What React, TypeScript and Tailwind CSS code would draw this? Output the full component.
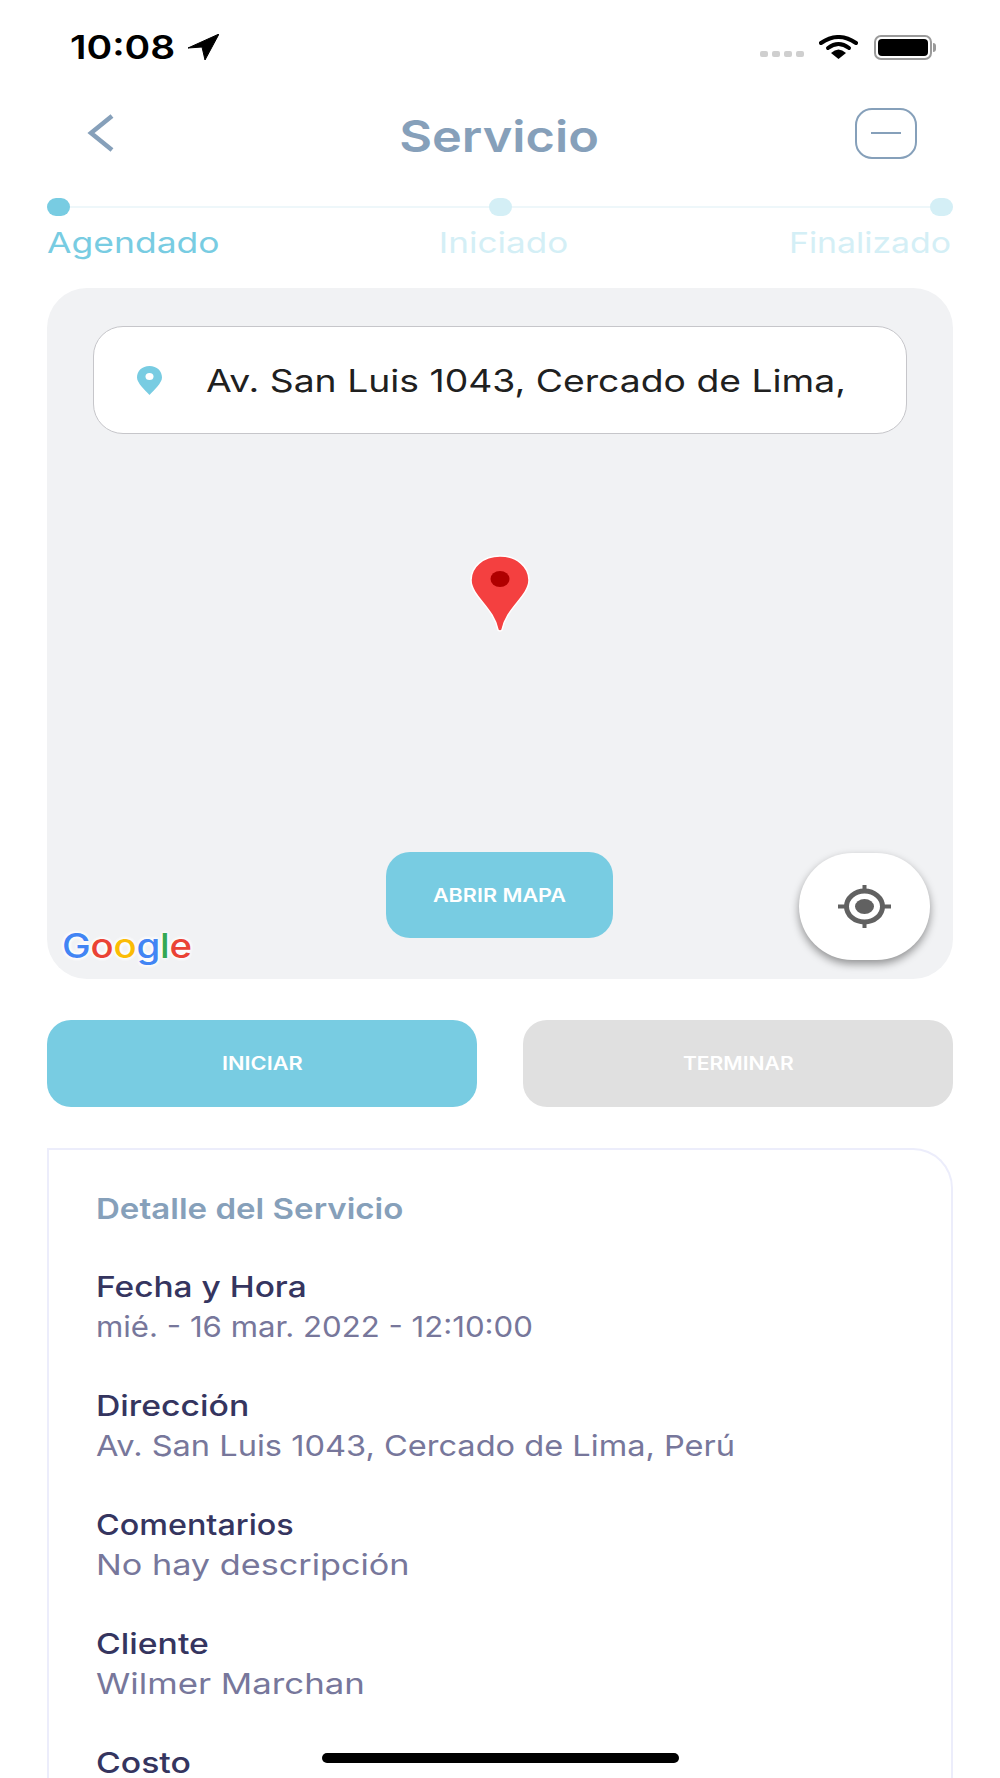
import React from 'react';

const rows = [
  { label: 'Fecha y Hora', value: 'mié. - 16 mar. 2022 - 12:10:00', labelFit: 'scale-x-[1.154]', valueFit: 'scale-x-[1.075]' },
  { label: 'Dirección', value: 'Av. San Luis 1043, Cercado de Lima, Perú', labelFit: 'scale-x-[1.164]', valueFit: 'scale-x-[1.123]' },
  { label: 'Comentarios', value: 'No hay descripción', labelFit: 'scale-x-[1.114]', valueFit: 'scale-x-[1.18]' },
  { label: 'Cliente', value: 'Wilmer Marchan', labelFit: 'scale-x-[1.164]', valueFit: 'scale-x-[1.2]' },
  { label: 'Costo', value: '', labelFit: 'scale-x-[1.164]', valueFit: '' },
];

function StatusBar() {
  return (
    <div className="flex h-[94px] items-center justify-between pl-[70px] pr-[64px]">
      <div className="flex items-center gap-[29px]">
        <span className="origin-left scale-x-[1.18] text-[33px] leading-none font-semibold text-black">10:08</span>
        <svg width="31" height="26" viewBox="0 0 31 26">
          <path d="M0 14 L31 0 L17 26 L14 13 Z" fill="#000" stroke="#000" strokeWidth="1" strokeLinejoin="round" />
        </svg>
      </div>
      <div className="flex items-center">
        <div className="mt-[14px] mr-[15px] flex gap-[4px]">
          {[0, 1, 2, 3].map((i) => (
            <div key={i} className="h-[6px] w-[8px] rounded-[2px] bg-[#cfcfcf]" />
          ))}
        </div>
        <svg width="39" height="24" viewBox="0 0 39 24" className="mr-[16px]">
          <path d="M2 8 Q19.5 -4 37 8" fill="none" stroke="#000" strokeWidth="4" strokeLinecap="round" />
          <path d="M9 13 Q19.5 5 30 13" fill="none" stroke="#000" strokeWidth="4" strokeLinecap="round" />
          <path d="M12 18 Q19.5 11 27 18 L19.5 24 Z" fill="#000" />
        </svg>
        <div className="flex items-center">
          <div className="flex h-[25px] w-[58px] items-center rounded-[7px] border-2 border-[#9a9a9a] p-[2px]">
            <div className="h-full w-full rounded-[4px] bg-black" />
          </div>
          <div className="ml-[1px] h-[9px] w-[3px] rounded-r-full bg-[#9a9a9a]" />
        </div>
      </div>
    </div>
  );
}

function Header() {
  return (
    <div className="flex h-[78px] items-center justify-between pl-[87px] pr-[83px]">
      <svg width="28" height="38" viewBox="0 0 28 38">
        <path d="M25 2 L4 19 L25 36" fill="none" stroke="#86a0ba" strokeWidth="4.5" />
      </svg>
      <h1 className="mt-[6px] ml-[28px] scale-x-[1.147] text-[44px] leading-none font-semibold text-[#86a0ba]">Servicio</h1>
      <div className="flex h-[51px] w-[62px] items-center justify-center rounded-[17px] border-2 border-[#86a0ba]">
        <div className="h-[2px] w-[30px] bg-[#86a0ba]" />
      </div>
    </div>
  );
}

function Stepper() {
  return (
    <div className="mt-[26px] px-[47px]">
      <div className="flex items-center">
        <div className="h-[18px] w-[23px] rounded-full bg-[#78cce2]" />
        <div className="h-[2px] flex-1 bg-[#eef7fa]" />
        <div className="h-[18px] w-[23px] rounded-full bg-[#d4eff6]" />
        <div className="h-[2px] flex-1 bg-[#eef7fa]" />
        <div className="h-[18px] w-[23px] rounded-full bg-[#d4eff6]" />
      </div>
      <div className="mt-[11px] flex justify-between pr-[2px] text-[29px] leading-[32px]">
        <span className="origin-left scale-x-[1.224] text-[#78cce2]">Agendado</span>
        <span className="ml-[6px] scale-x-[1.21] text-[#d4eff6]">Iniciado</span>
        <span className="origin-right scale-x-[1.166] text-[#d4eff6]">Finalizado</span>
      </div>
    </div>
  );
}

function MapCard() {
  return (
    <div className="relative mx-[47px] mt-[29px] h-[691px] rounded-[40px] bg-[#f1f2f4] pt-[38px]">
      <div className="mx-[46px] flex h-[108px] items-center rounded-[30px] border border-[#c6c6ca] bg-white pl-[43px]">
        <svg width="25" height="29" viewBox="0 0 25 29">
          <path d="M12.5 0 C5 0 0 5 0 11.5 C0 17 8 24 12.5 29 C17 24 25 17 25 11.5 C25 5 20 0 12.5 0 Z" fill="#78cce2" />
          <ellipse cx="12.5" cy="10.5" rx="4" ry="3.5" fill="#fff" />
        </svg>
        <span className="ml-[44px] origin-left scale-x-[1.203] text-[31px] leading-none text-[#202020]">Av. San Luis 1043, Cercado de Lima,</span>
      </div>

      {/* marker */}
      <svg width="60" height="79" viewBox="0 0 60 79" className="absolute top-[266px] left-[423px]">
        <path
          d="M30 2 C13 2 1 13 1 26 C1 42 24 54 28 76 Q30 78 32 76 C36 54 59 42 59 26 C59 13 47 2 30 2 Z"
          fill="#f44040"
          stroke="#fff"
          strokeWidth="1.5"
        />
        <ellipse cx="30" cy="25" rx="9.5" ry="8" fill="#b00000" />
      </svg>

      <div className="absolute top-[564px] left-[339px] flex h-[86px] w-[227px] items-center justify-center rounded-[24px] bg-[#78cce2] text-[18px] font-semibold text-white">
        <span className="scale-x-[1.2]">ABRIR MAPA</span>
      </div>

      <div className="absolute top-[565px] left-[752px] flex h-[107px] w-[131px] items-center justify-center rounded-full bg-white shadow-[0_4px_8px_rgba(0,0,0,0.4)]">
        <svg width="53" height="43" viewBox="0 0 53 43">
          <ellipse cx="26.5" cy="21.5" rx="18" ry="15.5" fill="none" stroke="#616161" strokeWidth="5" />
          <ellipse cx="26.5" cy="21.5" rx="9.5" ry="7.5" fill="#616161" />
          <path d="M26.5 0 V6 M26.5 37 V43 M0 21.5 H8 M45 21.5 H53" stroke="#616161" strokeWidth="4" />
        </svg>
      </div>

      <div className="absolute bottom-[13px] left-[15px] origin-left scale-x-[1.13] text-[34px] leading-[40px] font-medium tracking-[-0.2px] [text-shadow:0_0_4px_#fff,0_0_4px_#fff,0_0_4px_#fff]">
        <span className="text-[#4285f4]">G</span>
        <span className="text-[#ea4335]">o</span>
        <span className="text-[#fbbc05]">o</span>
        <span className="text-[#4285f4]">g</span>
        <span className="text-[#34a853]">l</span>
        <span className="text-[#ea4335]">e</span>
      </div>
    </div>
  );
}

function Actions() {
  return (
    <div className="mx-[47px] mt-[41px] flex gap-[46px]">
      <div className="flex h-[87px] flex-1 items-center justify-center rounded-[24px] bg-[#78cce2] text-[18px] font-semibold text-white">
        <span className="scale-x-[1.21]">INICIAR</span>
      </div>
      <div className="flex h-[87px] flex-1 items-center justify-center rounded-[24px] bg-[#e0e0e0] text-[18px] font-semibold text-white">
        <span className="scale-x-[1.17]">TERMINAR</span>
      </div>
    </div>
  );
}

function Details() {
  return (
    <div className="mx-[47px] mt-[41px] rounded-tr-[40px] border-2 border-b-0 border-[#ecedfb] pt-[39px] pl-[47px]">
      <h2 className="origin-left scale-x-[1.14] text-[29px] leading-[40px] font-semibold text-[#86a0ba]">Detalle del Servicio</h2>
      <div className="mt-[38px] flex flex-col gap-[39px]">
        {rows.map((row) => (
          <div key={row.label}>
            <p className={`origin-left ${row.labelFit} text-[29px] leading-[40px] font-medium text-[#35355f]`}>{row.label}</p>
            {row.value && <p className={`origin-left ${row.valueFit} text-[29px] leading-[40px] text-[#77779b]`}>{row.value}</p>}
          </div>
        ))}
      </div>
    </div>
  );
}

export default function App() {
  return (
    <div className="relative h-[1778px] w-[1000px] overflow-hidden bg-white font-['Inter',sans-serif]">
      <StatusBar />
      <Header />
      <Stepper />
      <MapCard />
      <Actions />
      <Details />
      {/* home indicator */}
      <div className="absolute top-[1753px] left-[322px] h-[10px] w-[357px] rounded-full bg-black" />
    </div>
  );
}
